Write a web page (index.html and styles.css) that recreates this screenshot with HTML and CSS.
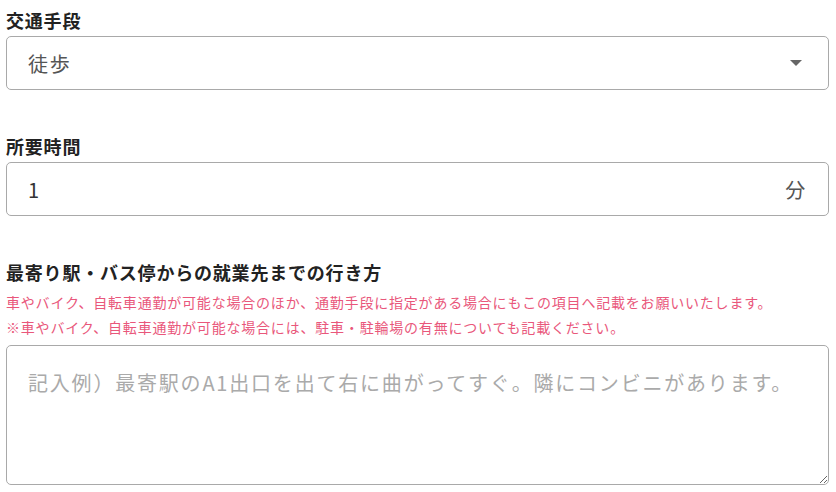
FILE: index.html
```
<!DOCTYPE html>
<html lang="ja">
<head>
<meta charset="utf-8">
<title>交通手段</title>
<link rel="stylesheet" href="styles.css">
</head>
<body>
<form class="form">
  <div class="field">
    <label class="label" for="means">交通手段</label>
    <div class="select-wrap">
      <select id="means" class="select">
        <option>徒歩</option>
      </select>
      <span class="caret"></span>
    </div>
  </div>
  <div class="field">
    <label class="label" for="time">所要時間</label>
    <div class="unit-input">
      <input id="time" class="input" type="text" value="1">
      <span class="unit">分</span>
    </div>
  </div>
  <div class="field">
    <label class="label" for="route">最寄り駅・バス停からの就業先までの行き方</label>
    <p class="note">車やバイク、自転車通勤が可能な場合のほか、通勤手段に指定がある場合にもこの項目へ記載をお願いいたします。<br>※車やバイク、自転車通勤が可能な場合には、駐車・駐輪場の有無についても記載ください。</p>
    <textarea id="route" class="textarea" placeholder="記入例）最寄駅のA1出口を出て右に曲がってすぐ。隣にコンビニがあります。"></textarea>
  </div>
</form>
</body>
</html>
```
FILE: styles.css
```
html, body {
  margin: 0;
  padding: 0;
  background: #fff;
}
body {
  font-family: "Noto Sans CJK JP", "Noto Sans", sans-serif;
  color: #222;
  letter-spacing: 0.05em;
}
.form {
  display: flex;
  flex-direction: column;
  gap: 43px;
  padding: 7px 7px 0 6px;
}
.field {
  display: flex;
  flex-direction: column;
}
.label {
  font-size: 18px;
  font-weight: 700;
  line-height: 26px;
  color: #222;
  margin-bottom: 3px;
}
.select-wrap {
  position: relative;
}
.select {
  appearance: none;
  -webkit-appearance: none;
  width: 100%;
  height: 54px;
  box-sizing: border-box;
  border: 1px solid #a9a9a9;
  border-radius: 5px;
  background: #fff;
  padding: 0 20px 0 21px;
  font-family: inherit;
  font-size: 20px;
  letter-spacing: 0.09em;
  color: #555;
  outline: none;
}
.caret {
  position: absolute;
  right: 27px;
  top: 24px;
  width: 0;
  height: 0;
  border-left: 6px solid transparent;
  border-right: 6px solid transparent;
  border-top: 6px solid #666;
}
.unit-input {
  display: flex;
  align-items: center;
  height: 54px;
  box-sizing: border-box;
  border: 1px solid #a9a9a9;
  border-radius: 5px;
  padding: 0 22px 0 21px;
}
.input {
  flex: 1;
  border: none;
  outline: none;
  padding: 0;
  font-family: inherit;
  font-size: 20px;
  letter-spacing: 0.09em;
  color: #333;
  background: transparent;
}
.unit {
  font-size: 20px;
  color: #555;
}
.note {
  margin: 2px 0 5px;
  font-size: 14px;
  line-height: 25px;
  color: #e9577b;
}
.textarea {
  height: 140px;
  box-sizing: border-box;
  border: 1px solid #a9a9a9;
  border-radius: 5px;
  padding: 22px 20px 0 21px;
  font-family: inherit;
  font-size: 20px;
  line-height: 30px;
  letter-spacing: 0.09em;
  color: #333;
  outline: none;
  resize: vertical;
}
.textarea::placeholder {
  color: #aaa;
}
```
